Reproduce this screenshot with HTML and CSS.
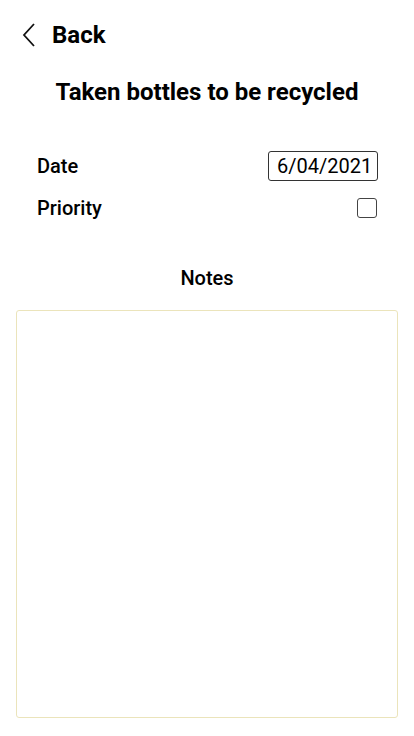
FILE: index.html
```html
<!DOCTYPE html>
<html>
<head>
<meta charset="utf-8">
<link rel="stylesheet" href="styles.css">
</head>
<body>
<div class="screen">
  <header class="topbar">
    <svg class="chev" width="14" height="24" viewBox="0 0 14 24"><path d="M12 1 L2 12 L12 23" fill="none" stroke="#111" stroke-width="1.8"/></svg>
    <span class="back">Back</span>
  </header>
  <h1 class="title">Taken bottles to be recycled</h1>
  <div class="fields">
    <div class="row">
      <span class="label">Date</span>
      <span class="datebox">6/04/2021</span>
    </div>
    <div class="row">
      <span class="label">Priority</span>
      <span class="checkbox"></span>
    </div>
  </div>
  <div class="notes-label">Notes</div>
  <div class="notes"></div>
</div>
</body>
</html>
```

FILE: styles.css
```css
* { box-sizing: border-box; }
html, body { margin: 0; padding: 0; background: #fff; }
body { font-family: Roboto, "Noto Sans", sans-serif; color: #000; }
.screen { width: 414px; height: 736px; display: flex; flex-direction: column; }
.topbar { display: flex; align-items: center; height: 70px; padding-left: 22px; }
.chev { display: block; margin-right: 16px; }
.back { font-weight: 700; font-size: 24px; }
.title { margin: 0; text-align: center; font-size: 24px; font-weight: 700; line-height: 44px; }
.fields { padding: 0 36px 0 37px; margin-top: 37px; display: flex; flex-direction: column; gap: 12px; }
.row { display: flex; justify-content: space-between; align-items: center; height: 30px; }
.label { font-size: 20px; font-weight: 500; }
.datebox { font-size: 20px; border: 1px solid #333; border-radius: 3px; padding: 0 5px 0 8px; height: 30px; line-height: 28px; width: 110px; text-align: right; }
.checkbox { width: 20px; height: 20px; border: 1.5px solid #444; border-radius: 3px; margin-right: 1px; }
.notes-label { text-align: center; font-size: 20px; font-weight: 500; margin-top: 43px; line-height: 24px; }
.notes { margin: 20px 16px 0 16px; height: 408px; border: 1px solid #ebe4bb; border-radius: 3px; }
```
